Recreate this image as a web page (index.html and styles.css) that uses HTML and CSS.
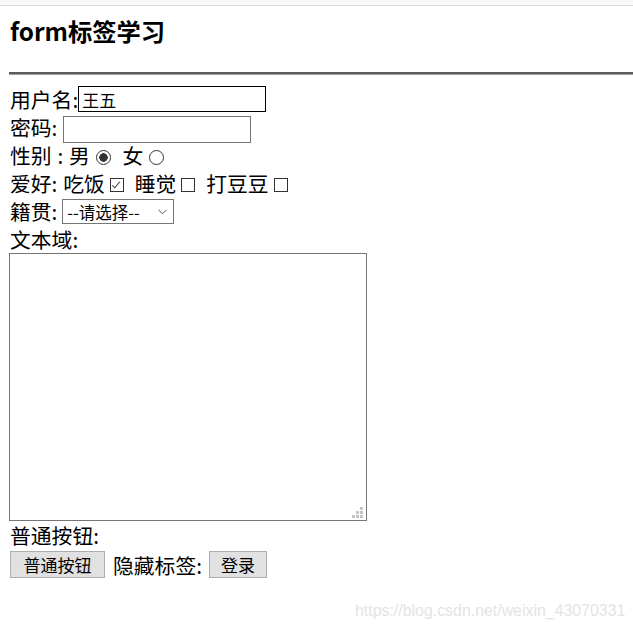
FILE: index.html
```html
<!DOCTYPE html>
<html lang="zh-CN">
<head>
<meta charset="utf-8">
<title>form标签学习</title>
<link rel="stylesheet" href="styles.css">
</head>
<body>
<div class="topbar"></div>
<div class="page">
  <h3 class="title">form标签学习</h3>
  <hr class="rule">
  <form class="form">
    <div class="row">用户名:<input class="text text-focus" type="text" value="王五"></div>
    <div class="row">密码: <input class="text" type="password"></div>
    <div class="row">性别 : 男 <input class="radio" type="radio" name="sex" checked> 女 <input class="radio" type="radio" name="sex"></div>
    <div class="row">爱好: 吃饭<input class="check" type="checkbox" checked> 睡觉<input class="check" type="checkbox"> 打豆豆<input class="check" type="checkbox"></div>
    <div class="row">籍贯: <span class="select-wrap"><select class="select"><option>--请选择--</option></select><svg class="chev" width="9" height="6" viewBox="0 0 9 6"><path d="M0.5 0.8 L4.5 4.8 L8.5 0.8" fill="none" stroke="#555" stroke-width="1"/></svg></span></div>
    <div class="row">文本域:</div>
    <div class="area-wrap"><textarea class="area"></textarea><svg class="grip" width="11" height="11" viewBox="0 0 11 11"><rect x="8" y="0" width="3" height="3" fill="#c4c4c4"/><rect x="4" y="4" width="3" height="3" fill="#c4c4c4"/><rect x="8" y="4" width="3" height="3" fill="#c4c4c4"/><rect x="0" y="8" width="3" height="3" fill="#c4c4c4"/><rect x="4" y="8" width="3" height="3" fill="#c4c4c4"/><rect x="8" y="8" width="3" height="3" fill="#c4c4c4"/></svg></div>
    <div class="row row-tall">普通按钮:</div>
    <div class="btn-row"><button class="btn" type="button">普通按钮</button><span class="btn-label">隐藏标签:</span><input type="hidden" value="x"><button class="btn btn-small" type="button">登录</button></div>
  </form>
</div>
<div class="watermark">https://blog.csdn.net/weixin_43070331</div>
</body>
</html>
```
FILE: styles.css
```css
html, body {
  margin: 0;
  padding: 0;
  background: #fff;
}
body {
  font-family: "Noto Sans CJK SC", "Microsoft YaHei", sans-serif;
  font-size: 20.8px;
  color: #000;
  word-spacing: 1.2px;
  overflow: hidden;
}
.topbar {
  height: 5px;
  background: #f8f8f8;
  border-bottom: 1px solid #dcdcdc;
}
.page {
  padding: 0 10px;
}
.title {
  margin: 10px 0 0;
  font-size: 24.3px;
  line-height: 30px;
  font-weight: bold;
}
.rule {
  margin: 26px -10px 0 -1px;
  height: 0;
  border: 0;
  border-top: 2px solid #5c5c5c;
  border-bottom: 1px solid #a0a0a0;
}
.form {
  margin-top: 10px;
}
.row {
  height: 28px;
  line-height: 28px;
  white-space: pre;
}
.row-tall {
  height: 29px;
  line-height: 29px;
}
.text {
  box-sizing: border-box;
  width: 188px;
  height: 27px;
  margin: 0;
  padding: 0 3px;
  border: 1px solid #767676;
  font-family: "Noto Sans CJK SC", sans-serif;
  font-size: 17px;
  vertical-align: middle;
  outline: none;
  position: relative;
  top: -1px;
}
.text-focus {
  height: 26px;
  border-color: #000;
  top: -3px;
}
.radio {
  -webkit-appearance: none;
  appearance: none;
  box-sizing: border-box;
  width: 15px;
  height: 15px;
  margin: 0 6px 0 0;
  border: 1px solid #333;
  border-radius: 50%;
  background: #fff;
  vertical-align: middle;
  position: relative;
  top: -1px;
}
.radio:checked {
  border: 1.5px solid #333;
  background: radial-gradient(circle, #333 0 4px, #fff 4.5px);
}
.check {
  -webkit-appearance: none;
  appearance: none;
  box-sizing: border-box;
  width: 14px;
  height: 14px;
  margin: 0 5px 0 5px;
  border: 1px solid #333;
  background: #fff;
  vertical-align: middle;
  position: relative;
  top: -1px;
}
.check:checked::after {
  content: "";
  position: absolute;
  left: 3px;
  top: 1px;
  width: 3px;
  height: 7px;
  border-right: 1.3px solid #444;
  border-bottom: 1.3px solid #444;
  transform: rotate(40deg);
}
.select-wrap {
  position: relative;
  top: -3px;
  display: inline-block;
  vertical-align: middle;
  height: 25px;
  line-height: 0;
  margin-left: -1px;
}
.select {
  -webkit-appearance: none;
  appearance: none;
  box-sizing: border-box;
  width: 112px;
  height: 25px;
  margin: 0;
  padding: 0 0 0 4px;
  border: 1px solid #767676;
  border-radius: 0;
  background: #fff;
  font-family: "Noto Sans CJK SC", sans-serif;
  font-size: 16.5px;
  color: #000;
}
.chev {
  position: absolute;
  left: 96px;
  top: 10px;
}
.area-wrap {
  position: relative;
  width: 358px;
  height: 268px;
  margin-left: -1px;
}
.area {
  display: block;
  box-sizing: border-box;
  width: 358px;
  height: 268px;
  margin: 0;
  border: 1px solid #767676;
  resize: none;
  outline: none;
}
.grip {
  position: absolute;
  right: 4px;
  bottom: 3px;
}
.btn-row {
  display: flex;
  align-items: center;
  height: 29px;
}
.btn-label {
  margin: 0 7px 0 8px;
  line-height: 28px;
}
.btn {
  box-sizing: border-box;
  height: 27px;
  margin: 0;
  padding: 0 12.5px;
  border: 1px solid #adadad;
  background: #e1e1e1;
  font-family: "Noto Sans CJK SC", sans-serif;
  font-size: 17px;
  line-height: 25px;
  color: #000;
}
.btn-small {
  padding: 0 11px;
}
.watermark {
  position: absolute;
  left: 355px;
  top: 602px;
  font-family: "Liberation Sans", Arial, sans-serif;
  font-size: 15.9px;
  color: #e4e4e4;
  word-spacing: 0;
  white-space: nowrap;
}
```
